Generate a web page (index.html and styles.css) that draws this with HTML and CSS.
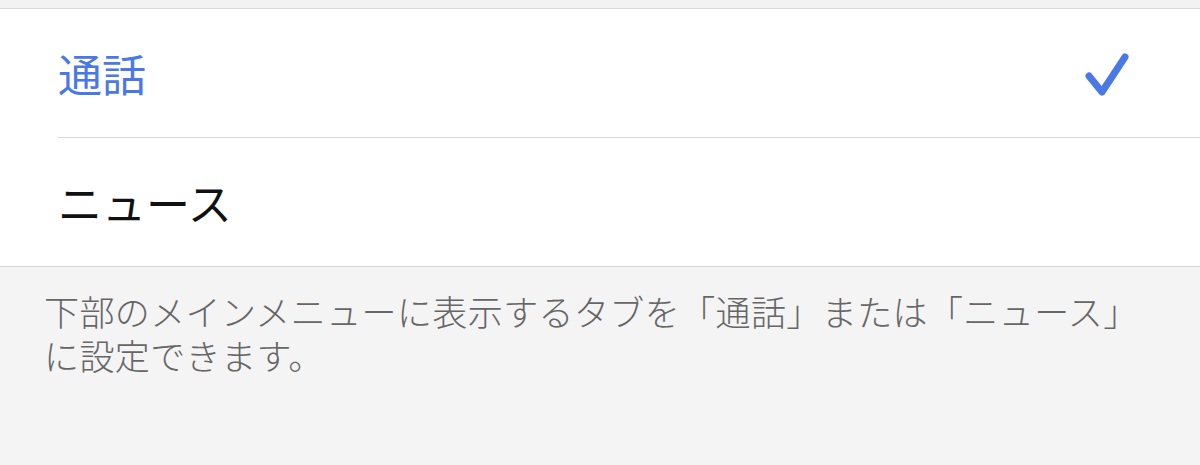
FILE: index.html
```html
<!DOCTYPE html>
<html lang="ja">
  <head>
    <meta charset="UTF-8" />
    <meta name="viewport" content="width=device-width, initial-scale=1.0" />
    <title>メインメニュー</title>
    <link rel="stylesheet" href="styles.css">
  </head>
  <body>
    <div class="top-gap"></div>

    <ul class="tab-list">
      <li class="tab-item selected">
        <div class="tab-inner">
          <span class="tab-label">通話</span>
          <svg class="check" width="52" height="52" viewBox="0 0 52 52">
            <polyline points="6,30 19,46 42,11" fill="none" stroke="#4a78e6" stroke-width="7" stroke-linecap="round" stroke-linejoin="round" />
          </svg>
        </div>
      </li>
      <li class="tab-item">
        <div class="tab-inner">
          <span class="tab-label">ニュース</span>
        </div>
      </li>
    </ul>

    <p class="footer-note">
      下部のメインメニューに表示するタブを「通話」または「ニュース」に設定できます。
    </p>
  </body>
</html>
```

FILE: styles.css
```css
body {
  margin: 0;
  background-color: #f4f4f4;
  font-family: "Noto Sans CJK JP", "Noto Sans", sans-serif;
}

.top-gap {
  height: 8px;
  background-color: #f2f2f2;
}

.tab-list {
  list-style: none;
  margin: 0;
  padding: 0;
  background-color: #fff;
  border-top: 1px solid #d9d9d9;
  border-bottom: 1px solid #d6d6d6;
}

.tab-item {
  padding-left: 58px;
}

.tab-inner {
  display: flex;
  align-items: center;
  justify-content: space-between;
  height: 128px;
  padding-right: 65px;
  border-bottom: 1px solid #d9d9d9;
}

.tab-item:last-child .tab-inner {
  border-bottom: none;
}

.tab-label {
  font-size: 44px;
  color: #111;
}

.selected .tab-label {
  color: #4a78e6;
}

.check {
  display: block;
  margin-top: -2px;
}

.footer-note {
  margin: 0;
  padding: 22px 40px 0 44px;
  font-size: 35px;
  line-height: 44px;
  letter-spacing: 0.4px;
  font-weight: 300;
  color: #666;
}
```
